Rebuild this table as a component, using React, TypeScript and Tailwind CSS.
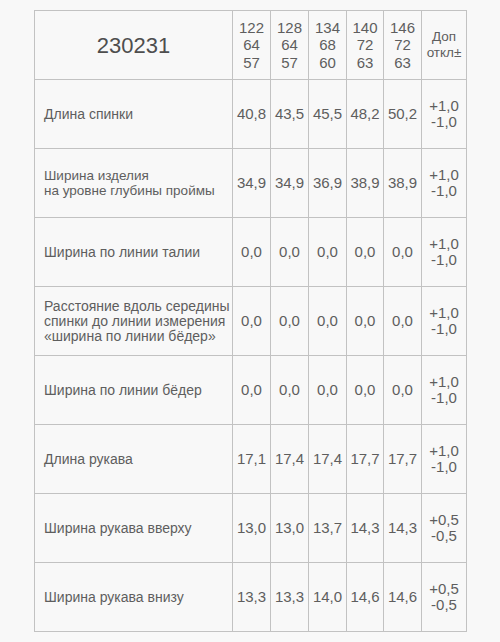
const sizes = [
  ["122", "64", "57"],
  ["128", "64", "57"],
  ["134", "68", "60"],
  ["140", "72", "63"],
  ["146", "72", "63"],
];

const rows = [
  { label: ["Длина спинки"], values: ["40,8", "43,5", "45,5", "48,2", "50,2"], tol: ["+1,0", "-1,0"] },
  { label: ["Ширина изделия", "на уровне глубины проймы"], small: true, values: ["34,9", "34,9", "36,9", "38,9", "38,9"], tol: ["+1,0", "-1,0"] },
  { label: ["Ширина по линии талии"], values: ["0,0", "0,0", "0,0", "0,0", "0,0"], tol: ["+1,0", "-1,0"] },
  {
    label: ["Расстояние вдоль середины", "спинки до линии измерения", "«ширина по линии бёдер»"],
    values: ["0,0", "0,0", "0,0", "0,0", "0,0"],
    tol: ["+1,0", "-1,0"],
  },
  { label: ["Ширина по линии бёдер"], values: ["0,0", "0,0", "0,0", "0,0", "0,0"], tol: ["+1,0", "-1,0"] },
  { label: ["Длина рукава"], values: ["17,1", "17,4", "17,4", "17,7", "17,7"], tol: ["+1,0", "-1,0"] },
  { label: ["Ширина рукава вверху"], values: ["13,0", "13,0", "13,7", "14,3", "14,3"], tol: ["+0,5", "-0,5"] },
  { label: ["Ширина рукава внизу"], values: ["13,3", "13,3", "14,0", "14,6", "14,6"], tol: ["+0,5", "-0,5"] },
];

export default function App() {
  return (
    <div className="w-[500px] h-[642px] bg-[#f8f8f8] pt-[10px] pl-[34px] font-['Liberation_Sans',Arial,sans-serif] text-[#5e5e5e]">
      <table className="border-collapse table-fixed w-[432px]">
        <colgroup>
          <col className="w-[198px]" />
          <col className="w-[38px]" />
          <col className="w-[38px]" />
          <col className="w-[38px]" />
          <col className="w-[37px]" />
          <col className="w-[38px]" />
          <col className="w-[45px]" />
        </colgroup>
        <tbody>
          <tr className="h-[69px]">
            <td className="border border-[#c2c2c2] text-center text-[22px] text-[#4e4e4e]">230231</td>
            {sizes.map((s, i) => (
              <td key={i} className="border border-[#c2c2c2] p-0 text-center text-[15px] leading-[17.5px]">
                {s.map((n, k) => (
                  <div key={k}>{n}</div>
                ))}
              </td>
            ))}
            <td className="border border-[#c2c2c2] p-0 text-center text-[13.5px] leading-[16px]">
              <div>Доп</div>
              <div>откл±</div>
            </td>
          </tr>
          {rows.map((r, i) => (
            <tr key={i} className="h-[69px]">
              <td
                className={
                  r.small
                    ? "border border-[#c2c2c2] pl-[9px] pr-0 text-[13.5px] leading-[15px] whitespace-nowrap"
                    : "border border-[#c2c2c2] pl-[9px] pr-0 text-[14px] leading-[15px] whitespace-nowrap"
                }
              >
                {r.label.map((l) => (
                  <div key={l}>{l}</div>
                ))}
              </td>
              {r.values.map((v, j) => (
                <td key={j} className="border border-[#c2c2c2] p-0 text-center text-[15px] whitespace-nowrap">
                  {v}
                </td>
              ))}
              <td className="border border-[#c2c2c2] p-0 text-center text-[15px] leading-[16.5px]">
                <div>{r.tol[0]}</div>
                <div>{r.tol[1]}</div>
              </td>
            </tr>
          ))}
        </tbody>
      </table>
    </div>
  );
}
